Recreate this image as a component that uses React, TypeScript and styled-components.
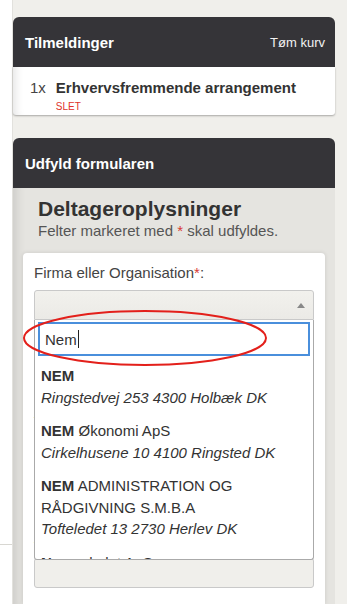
import React from "react";
import styled, { createGlobalStyle } from "styled-components";

const Global = createGlobalStyle`
  html, body { margin: 0; padding: 0; }
  body {
    background: #f0efeb;
    font-family: "Liberation Sans", Arial, sans-serif;
    color: #333;
    overflow: hidden;
  }
`;

const Page = styled.div`
  display: flex;
  width: 347px;
  height: 604px;
  overflow: hidden;
`;

const SideStrip = styled.div`
  width: 12px;
  flex: none;
  background: #ffffff;
  border-right: 1px solid #e2e1dd;
  display: flex;
  flex-direction: column;
`;

const SideSpacer = styled.div`
  height: 544px;
`;

const SideRule = styled.div`
  height: 1px;
  background: #d8d7d2;
`;

const Main = styled.div`
  width: 322px;
  padding-top: 17px;
  display: flex;
  flex-direction: column;
  gap: 23px;
`;

const Card = styled.section<{ $grow?: boolean }>`
  display: flex;
  flex-direction: column;
  border-radius: 6px 6px 0 0;
  ${(p) => (p.$grow ? "flex: 1;" : "")}
`;

const CardHeader = styled.header`
  height: 50px;
  background: #353438;
  border-radius: 6px 6px 0 0;
  display: flex;
  align-items: center;
  justify-content: space-between;
  padding: 0 10px 0 12px;
  color: #fff;
`;

const CardTitle = styled.h2<{ $size?: number }>`
  margin: 0;
  font-size: ${(p) => p.$size ?? 15}px;
  font-weight: bold;
`;

const HeaderLink = styled.span`
  font-size: 13px;
  color: #f2f2f2;
`;

const CartBody = styled.div`
  background: #fff;
  height: 48px;
  padding: 12px 0 0 17px;
  box-sizing: border-box;
  border-radius: 0 0 3px 3px;
  box-shadow: inset 10px 0 10px -8px rgba(0, 0, 0, 0.12), 0 1px 2px rgba(0, 0, 0, 0.3);
`;

const CartRow = styled.div`
  display: flex;
  gap: 10px;
  font-size: 15px;
  line-height: 18px;
`;

const Qty = styled.span`
  color: #444;
`;

const ItemCol = styled.div`
  display: flex;
  flex-direction: column;
`;

const ItemName = styled.span`
  font-weight: bold;
  color: #333;
`;

const Delete = styled.span`
  font-size: 10px;
  line-height: 12px;
  margin-top: 4px;
  color: #e0322b;
`;

const FormBody = styled.div`
  flex: 1;
  background: #e5e4e0;
  box-shadow: inset 12px 0 10px -8px rgba(0, 0, 0, 0.1);
  padding: 8px 10px 0 10px;
  display: flex;
  flex-direction: column;
`;

const Intro = styled.div`
  padding: 0 0 14px 15px;
`;

const Heading = styled.h3`
  margin: 0;
  font-size: 21px;
  line-height: 26px;
  font-weight: bold;
  color: #333;
`;

const Sub = styled.p`
  margin: 0;
  font-size: 15px;
  line-height: 17px;
  color: #555;
`;

const Req = styled.span`
  color: #d83a34;
`;

const Panel = styled.div`
  flex: 1;
  background: #fff;
  border-radius: 4px 4px 0 0;
  box-shadow: 0 0 4px rgba(0, 0, 0, 0.12);
  padding: 9px 11px 0 11px;
`;

const Label = styled.label`
  display: block;
  font-size: 15px;
  line-height: 22px;
  color: #444;
  margin-bottom: 6px;
`;

const SelectWrap = styled.div`
  position: relative;
`;

const SelectBox = styled.div<{ $open?: boolean }>`
  height: 30px;
  box-sizing: border-box;
  border: 1px solid #c9c9c9;
  border-radius: ${(p) => (p.$open ? "3px 3px 0 0" : "3px")};
  background: linear-gradient(#f2f1ed, #ebeae6);
  display: flex;
  align-items: center;
  justify-content: flex-end;
  padding-right: 8px;
`;

const Arrow = styled.span`
  width: 0;
  height: 0;
  border-left: 4px solid transparent;
  border-right: 4px solid transparent;
  border-bottom: 5px solid #888;
`;

const Dropdown = styled.div`
  position: absolute;
  top: 30px;
  left: 0;
  right: 0;
  height: 240px;
  box-sizing: border-box;
  background: #fff;
  border: 1px solid #aaa;
  border-top: none;
  border-radius: 0 0 3px 3px;
  overflow: hidden;
  z-index: 2;
`;

const SearchWrap = styled.div`
  padding: 2px 3px 3px 3px;
`;

const Search = styled.div`
  height: 34px;
  box-sizing: border-box;
  border: 2px solid #4a8fdc;
  display: flex;
  align-items: center;
  padding-left: 5px;
  font-size: 15px;
  color: #333;
`;

const Caret = styled.span`
  display: inline-block;
  width: 1px;
  height: 18px;
  background: #222;
  margin-left: 1px;
`;

const Results = styled.ul`
  list-style: none;
  margin: 0;
  padding: 0;
`;

const Result = styled.li`
  padding: 6px 6px;
  font-size: 15px;
  line-height: 21.5px;
  color: #333;
`;

const Addr = styled.div`
  font-style: italic;
`;

const Ellipse = styled.svg`
  position: absolute;
  left: -12px;
  top: 19px;
  width: 246px;
  height: 58px;
  overflow: visible;
  z-index: 3;
  pointer-events: none;
`;

const Field = styled.div`
  margin-top: 15px;
`;

const FieldLabel = styled.div`
  font-size: 15px;
  line-height: 22px;
  color: #444;
`;

const Input = styled.div`
  height: 30px;
  box-sizing: border-box;
  border: 1px solid #c9c9c9;
  border-radius: 3px;
  background: #f0efeb;
`;

const results = [
  { name: "NEM", rest: "", addr: ["Ringstedvej 253 4300 Holbæk DK"] },
  { name: "NEM", rest: " Økonomi ApS", addr: ["Cirkelhusene 10 4100 Ringsted DK"] },
  { name: "NEM", rest: " ADMINISTRATION OG RÅDGIVNING S.M.B.A", addr: ["Tofteledet 13 2730 Herlev DK"] },
  { name: "Nem", rest: "solvdet ApS", addr: ["Nørregade 4 1165 København DK"] },
];

const hiddenFields = ["CVR-nummer", "Adresse", "Postnr. og by", "Telefon"];

export default function App() {
  return (
    <>
      <Global />
      <Page>
        <SideStrip>
          <SideSpacer />
          <SideRule />
        </SideStrip>
        <Main>
          <Card>
            <CardHeader>
              <CardTitle>Tilmeldinger</CardTitle>
              <HeaderLink>Tøm kurv</HeaderLink>
            </CardHeader>
            <CartBody>
              <CartRow>
                <Qty>1x</Qty>
                <ItemCol>
                  <ItemName>Erhvervsfremmende arrangement</ItemName>
                  <Delete>SLET</Delete>
                </ItemCol>
              </CartRow>
            </CartBody>
          </Card>
          <Card $grow>
            <CardHeader>
              <CardTitle>Udfyld formularen</CardTitle>
            </CardHeader>
            <FormBody>
              <Intro>
                <Heading>Deltageroplysninger</Heading>
                <Sub>
                  Felter markeret med <Req>*</Req> skal udfyldes.
                </Sub>
              </Intro>
              <Panel>
                <Label>
                  Firma eller Organisation<Req>*</Req>:
                </Label>
                <SelectWrap>
                  <SelectBox $open>
                    <Arrow />
                  </SelectBox>
                  <Dropdown>
                    <SearchWrap>
                      <Search>
                        Nem
                        <Caret />
                      </Search>
                    </SearchWrap>
                    <Results>
                      {results.map((r, i) => (
                        <Result key={i}>
                          <div>
                            <b>{r.name}</b>
                            {r.rest}
                          </div>
                          {r.addr.map((a) => (
                            <Addr key={a}>{a}</Addr>
                          ))}
                        </Result>
                      ))}
                    </Results>
                  </Dropdown>
                  <Ellipse viewBox="0 0 246 58">
                    <ellipse cx="123" cy="29" rx="121" ry="27" fill="none" stroke="#e3201b" strokeWidth="2" />
                  </Ellipse>
                </SelectWrap>
                {hiddenFields.map((f) => (
                  <Field key={f}>
                    <FieldLabel>{f}</FieldLabel>
                    <Input />
                  </Field>
                ))}
              </Panel>
            </FormBody>
          </Card>
        </Main>
      </Page>
    </>
  );
}
